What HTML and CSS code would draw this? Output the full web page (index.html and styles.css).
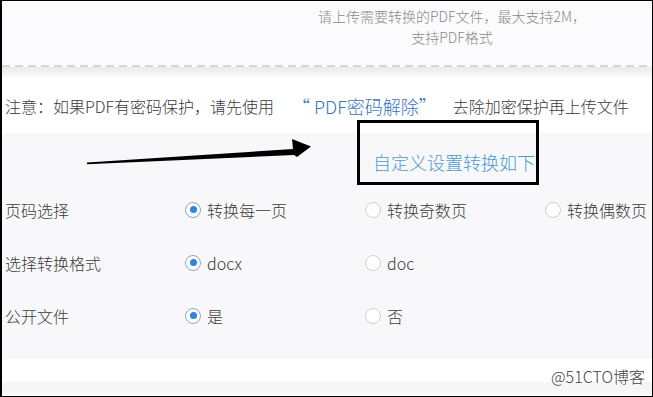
FILE: index.html
```html
<!DOCTYPE html>
<html lang="zh-CN">
<head>
    <meta charset="UTF-8">
    <title>PDF转Word</title>
    <link rel="stylesheet" href="styles.css">
</head>
<body>

<div class="frame">
    <div class="upload">
        <p class="upload-tip">请上传需要转换的PDF文件，最大支持2M，<br>支持PDF格式</p>
    </div>
    <div class="dash"></div>
    <div class="notice">
        <span>注意：如果PDF有密码保护，请先使用</span>
        <a class="notice-link" href="#">“ PDF密码解除”</a>
        <span>去除加密保护再上传文件</span>
    </div>

    <div class="settings">
        <h3 class="settings-title">自定义设置转换如下</h3>

        <div class="row">
            <span class="row-label">页码选择</span>
            <label class="opt"><span class="radio checked"></span>转换每一页</label>
            <label class="opt"><span class="radio"></span>转换奇数页</label>
            <label class="opt"><span class="radio"></span>转换偶数页</label>
        </div>
        <div class="row">
            <span class="row-label">选择转换格式</span>
            <label class="opt"><span class="radio checked"></span>docx</label>
            <label class="opt"><span class="radio"></span>doc</label>
        </div>
        <div class="row">
            <span class="row-label">公开文件</span>
            <label class="opt"><span class="radio checked"></span>是</label>
            <label class="opt"><span class="radio"></span>否</label>
        </div>
    </div>

    <div class="footer"></div>
    <div class="footer-strip"></div>

    <!-- annotation overlays -->
    <div class="mark-box"></div>
    <svg class="arrow" width="230" height="30" viewBox="0 0 230 30">
        <polygon points="2,24.6 208,11 207,1 226,8.5 212,19 209,17 2,26.2" fill="#000"/>
    </svg>
    <div class="watermark">@51CTO博客</div>
</div>

</body>
</html>
```

FILE: styles.css
```css
body {
    margin: 0;
    padding: 0;
    background: #fff;
    font-family: "Noto Sans CJK SC", "Noto Sans", sans-serif;
    font-weight: 300;
    color: #3a3a3a;
}

.frame {
    position: relative;
    width: 653px;
    height: 397px;
    box-sizing: border-box;
    border: 1px solid #000;
    border-left-width: 2px;
    overflow: hidden;
    background: #fff;
}

.upload {
    height: 64px;
    background: #fbfafc;
    padding-top: 5px;
    box-sizing: border-box;
}

.upload-tip {
    margin: 0 0 0 250px;
    width: 400px;
    text-align: center;
    font-size: 14px;
    line-height: 21px;
    color: #8a8a8a;
}

.dash {
    height: 14px;
    background-image:
        repeating-linear-gradient(to right, #d6d6d6 0 8px, transparent 8px 13px),
        linear-gradient(to bottom, #e9e9eb, #ffffff);
    background-size: 100% 2px, 100% 12px;
    background-position: 0 0, 0 2px;
    background-repeat: no-repeat;
    background-color: #fbfafc;
}

.notice {
    height: 54px;
    display: flex;
    align-items: center;
    padding-left: 3px;
    font-size: 16px;
    white-space: nowrap;
}

.notice-link {
    color: #3a72c2;
    text-decoration: none;
    font-size: 18px;
    margin: 0 16px 0 18px;
}

.settings {
    background: #f8f8fa;
    height: 226px;
}

.settings-title {
    margin: 0;
    height: 50px;
    padding: 18px 0 0 371px;
    box-sizing: border-box;
    font-size: 18px;
    line-height: 22px;
    font-weight: 300;
    color: #4c9bd0;
}

.row {
    display: grid;
    grid-template-columns: 180px 180px 180px auto;
    height: 53px;
    align-items: center;
    padding-left: 3px;
    font-size: 16px;
}

.opt {
    display: flex;
    align-items: center;
    white-space: nowrap;
}

.radio {
    width: 16px;
    height: 16px;
    box-sizing: border-box;
    border: 1px solid #cfcfcf;
    border-radius: 50%;
    background: #fff;
    margin-right: 6px;
    position: relative;
}

.radio.checked {
    border-color: #8aa6c4;
}

.radio.checked::after {
    content: "";
    position: absolute;
    left: 3.5px;
    top: 3.5px;
    width: 7px;
    height: 7px;
    border-radius: 50%;
    background: #2f86db;
}

.footer {
    height: 23px;
    background: #fff;
}

.footer-strip {
    height: 12px;
    background: #f6f6f8;
}

.mark-box {
    position: absolute;
    left: 355px;
    top: 119px;
    width: 182px;
    height: 65px;
    box-sizing: border-box;
    border: 3px solid #000;
}

.arrow {
    position: absolute;
    left: 83px;
    top: 137px;
}

.watermark {
    position: absolute;
    right: 7px;
    bottom: 8px;
    font-size: 16px;
    color: #444;
    text-shadow: 0 0 2px #fff;
}
```
